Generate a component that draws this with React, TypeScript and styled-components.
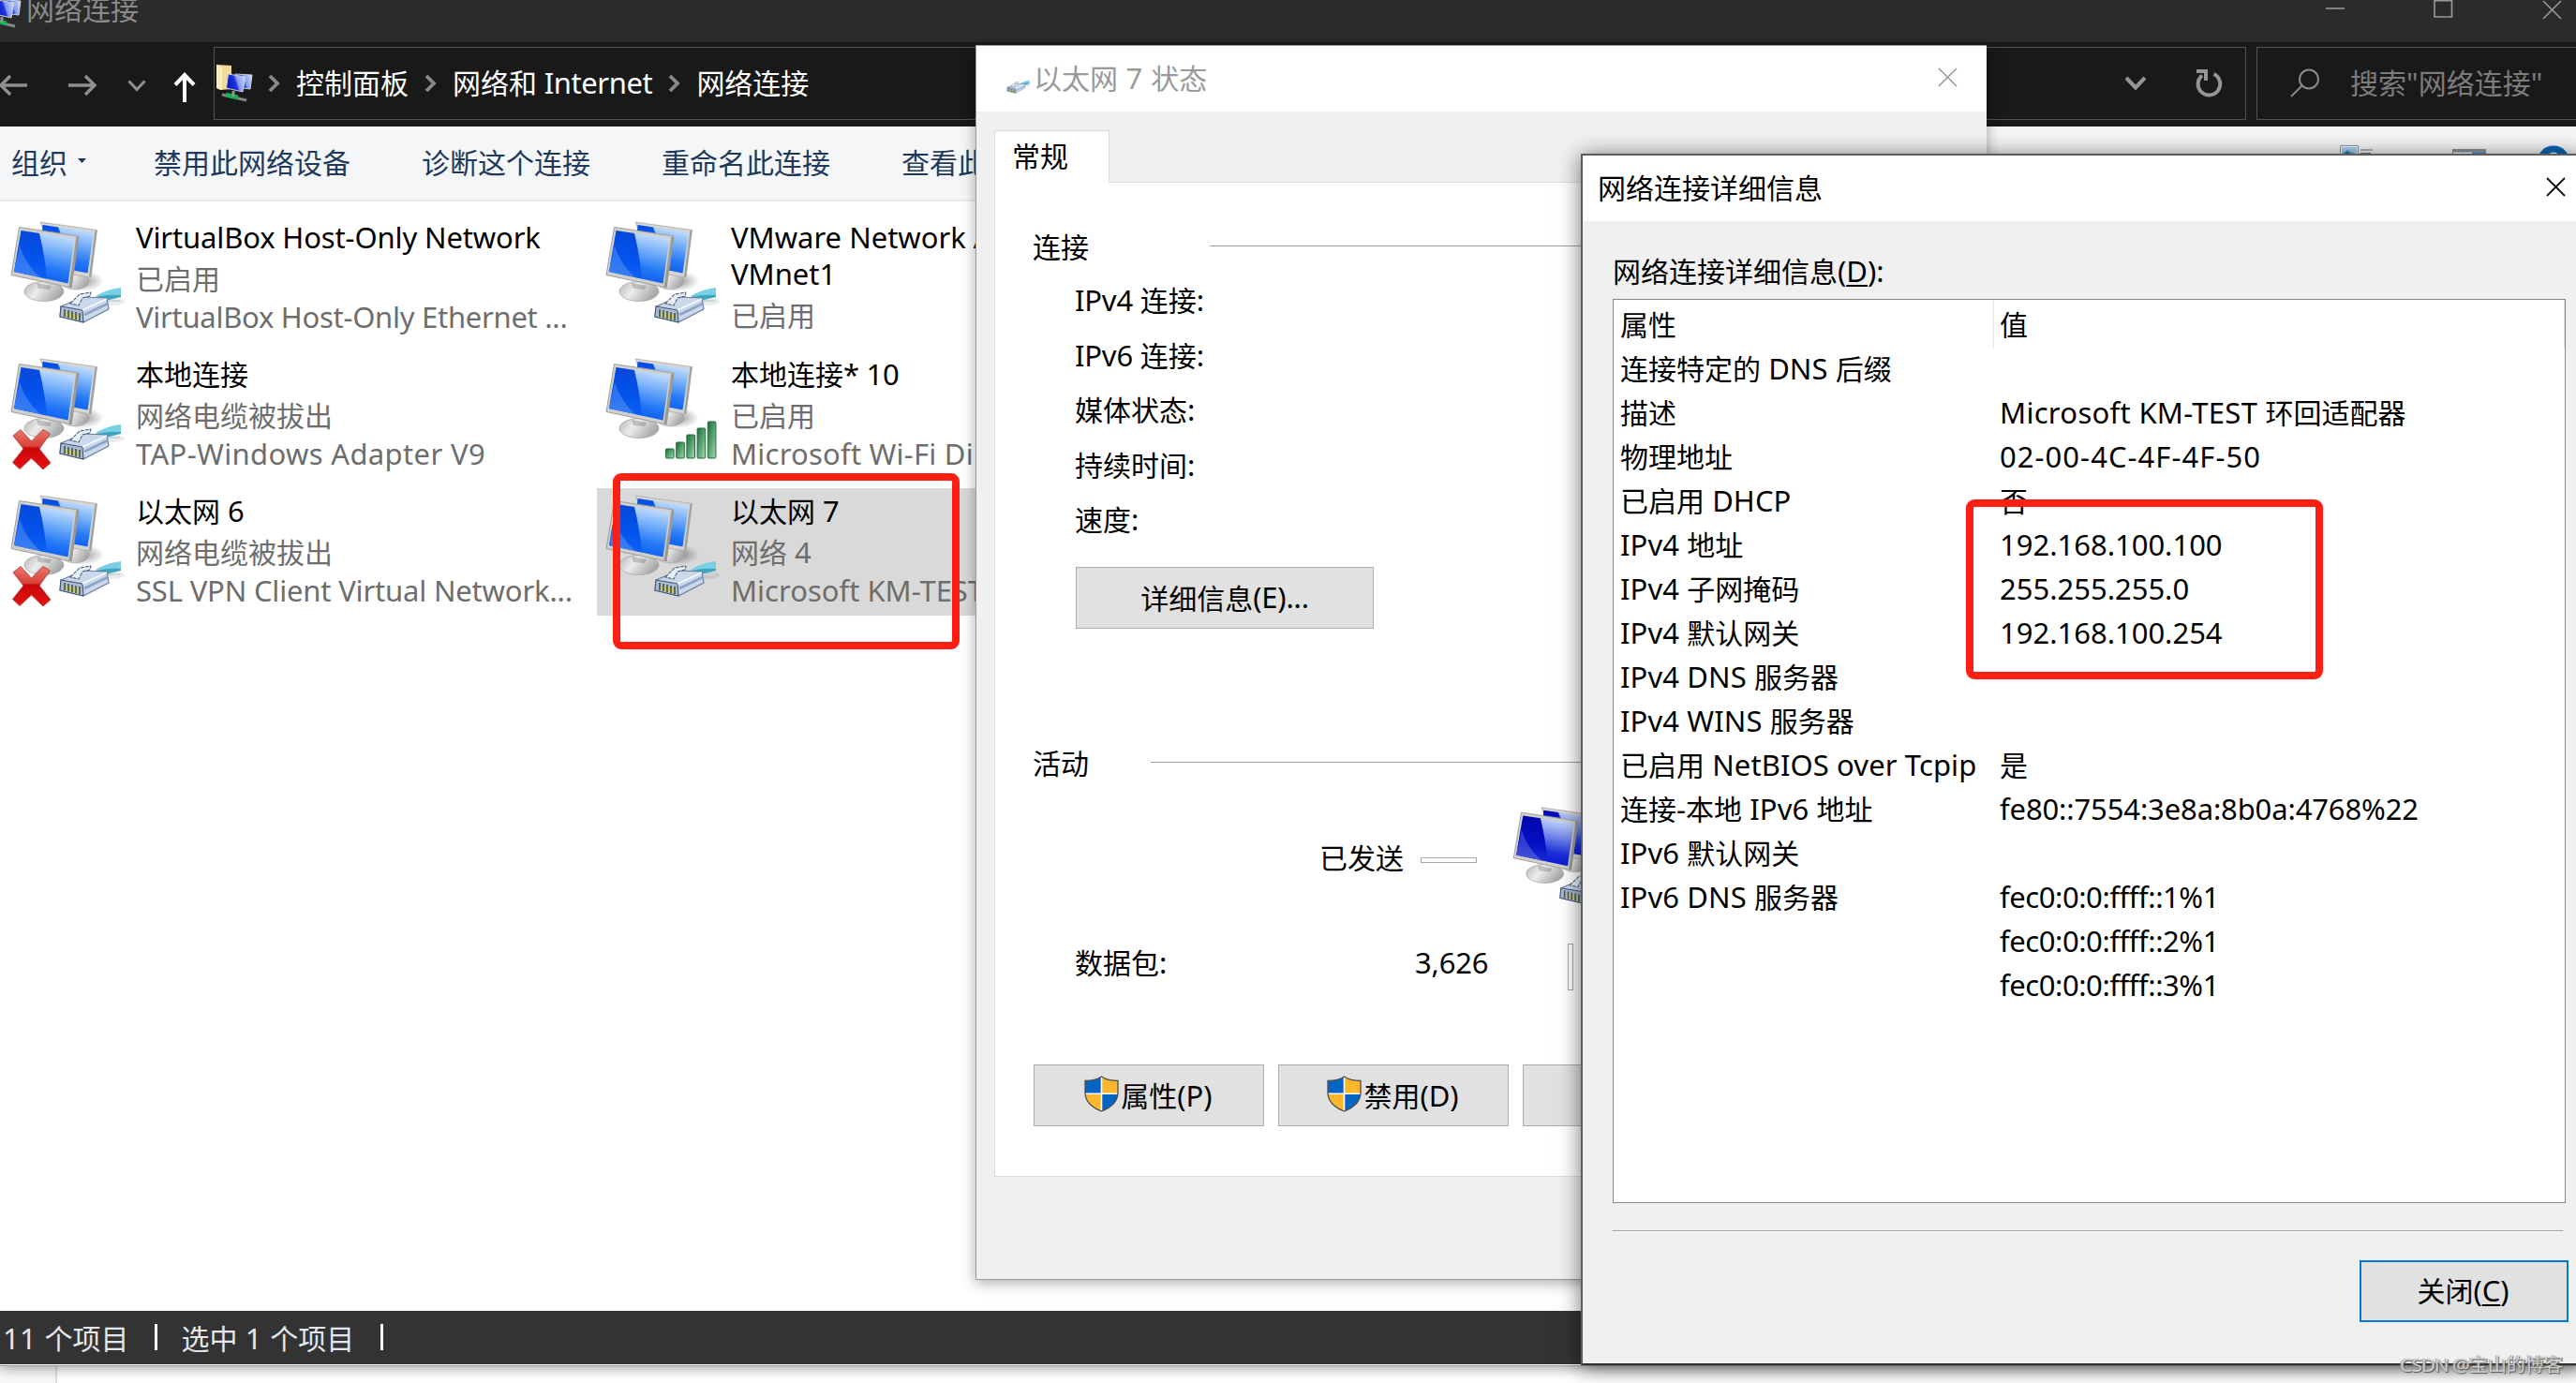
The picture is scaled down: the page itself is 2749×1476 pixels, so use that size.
import React from 'react';
import styled, { createGlobalStyle } from 'styled-components';

const grayText = '#6d6d6d';
const dialogGray = '#f0f0f0';
const markRed = '#ff1f12';

type Badge = 'cable' | 'wifi';

// [text, letter spacing of its Latin part]
type Line = [string, number?];

interface Connection {
    name: Line[];
    lines: Line[];
    badge: Badge;
    unplugged?: boolean;
    selected?: boolean;
}

const connectionColumns: Connection[][] = [
    [
        {
            name: [['VirtualBox Host-Only Network', -0.13]],
            lines: [['已启用'], ['VirtualBox Host-Only Ethernet ...', -0.27]],
            badge: 'cable',
        },
        {
            name: [['本地连接']],
            lines: [['网络电缆被拔出'], ['TAP-Windows Adapter V9', 0.36]],
            badge: 'cable',
            unplugged: true,
        },
        {
            name: [['以太网 6']],
            lines: [
                ['网络电缆被拔出'],
                ['SSL VPN Client Virtual Network...', -0.17],
            ],
            badge: 'cable',
            unplugged: true,
        },
    ],
    [
        {
            name: [['VMware Network A'], ['VMnet1']],
            lines: [['已启用']],
            badge: 'cable',
        },
        {
            name: [['本地连接* 10', -0.3]],
            lines: [['已启用'], ['Microsoft Wi-Fi Di', 0.22]],
            badge: 'wifi',
        },
        {
            name: [['以太网 7']],
            lines: [['网络 4'], ['Microsoft KM-TEST']],
            badge: 'cable',
            selected: true,
        },
    ],
];

const details: { name: string; value: string; tracking?: number }[] = [
    { name: '连接特定的 DNS 后缀', value: '' },
    { name: '描述', value: 'Microsoft KM-TEST 环回适配器', tracking: 0.3 },
    { name: '物理地址', value: '02-00-4C-4F-4F-50', tracking: 1.05 },
    { name: '已启用 DHCP', value: '否' },
    { name: 'IPv4 地址', value: '192.168.100.100' },
    { name: 'IPv4 子网掩码', value: '255.255.255.0' },
    { name: 'IPv4 默认网关', value: '192.168.100.254' },
    { name: 'IPv4 DNS 服务器', value: '' },
    { name: 'IPv4 WINS 服务器', value: '' },
    { name: '已启用 NetBIOS over Tcpip', value: '是' },
    {
        name: '连接-本地 IPv6 地址',
        value: 'fe80::7554:3e8a:8b0a:4768%22',
        tracking: -0.12,
    },
    { name: 'IPv6 默认网关', value: '' },
    { name: 'IPv6 DNS 服务器', value: 'fec0:0:0:ffff::1%1', tracking: -0.42 },
    { name: '', value: 'fec0:0:0:ffff::2%1', tracking: -0.42 },
    { name: '', value: 'fec0:0:0:ffff::3%1', tracking: -0.42 },
];

const statusLabels = ['IPv4 连接:', 'IPv6 连接:', '媒体状态:', '持续时间:', '速度:'];

// Latin runs are set in their own face, slightly larger than the Chinese text
const Mixed: React.FC<{ text: string; tracking?: number }> = ({
    text,
    tracking,
}) => (
    <>
        {text
            .split(/([\x20-\x7e]+)/)
            .filter(Boolean)
            .map((run, index) =>
                /^[\x20-\x7e]/.test(run) ? (
                    <Latin key={index} $tracking={tracking}>
                        {run}
                    </Latin>
                ) : (
                    run
                )
            )}
    </>
);

const Monitors: React.FC<{ deep?: boolean }> = ({ deep }) => {
    const id = deep ? 'deep' : 'bright';
    return (
        <>
            <defs>
                <linearGradient id={`${id}-screen`} x1="0.45" y1="1" x2="0.7" y2="0">
                    <stop offset="0" stopColor={deep ? '#0510cc' : '#0a5af0'} />
                    <stop offset="0.3" stopColor={deep ? '#1c30da' : '#2478f6'} />
                    <stop offset="0.65" stopColor={deep ? '#7f93ee' : '#7ab2fa'} />
                    <stop offset="1" stopColor="#d6e8ff" />
                </linearGradient>
                <linearGradient id={`${id}-glare`} x1="0.5" y1="0" x2="0.4" y2="1">
                    <stop offset="0" stopColor={deep ? '#0004a8' : '#0648da'} />
                    <stop offset="0.6" stopColor={deep ? '#0510c6' : '#0354ee'} />
                    <stop offset="1" stopColor={deep ? '#1a30d2' : '#0f64f4'} />
                </linearGradient>
                <linearGradient id={`${id}-stand`} x1="0" y1="0" x2="1" y2="0.4">
                    <stop offset="0" stopColor="#b4b4b4" />
                    <stop offset="0.45" stopColor="#ececec" />
                    <stop offset="1" stopColor="#a8a8a8" />
                </linearGradient>
                <radialGradient id={`${id}-shade`}>
                    <stop offset="0" stopColor="#000" stopOpacity="0.4" />
                    <stop offset="1" stopColor="#000" stopOpacity="0" />
                </radialGradient>
            </defs>
            <ellipse cx="84" cy="76" rx="22" ry="11" fill={`url(#${id}-shade)`} />
            <ellipse cx="75" cy="76" rx="15" ry="9" fill={`url(#${id}-stand)`} stroke="#a5a5a5" strokeWidth="0.6" />
            <path d="M38 13 98.5 21.5 92 72 60 67 Z" fill="#d6d5d2" stroke="#aaa9a6" strokeWidth="0.8" />
            <path d="M96.5 22 98.5 21.5 92 72 90 71 Z" fill="#a09f9c" />
            <path d="M40.5 16 95 24 88.5 67.5 60 62 Z" fill={`url(#${id}-screen)`} />
            <path d="M40.5 16 57 18.5 60 26 40 23 Z" fill={`url(#${id}-glare)`} />
            <path d="M36 77 52 80 54 86 33 84 Z" fill="#9b9b9b" />
            <ellipse cx="42" cy="87" rx="21" ry="10.5" fill={`url(#${id}-stand)`} stroke="#a0a0a0" strokeWidth="0.7" />
            <path d="M34 78 50 81 48 85 36 84 Z" fill="#000" opacity="0.18" />
            <path d="M15.5 18.5 78.5 28 71 83 7 69.5 Z" fill="#d0cfcc" stroke="#a09f9c" strokeWidth="1" />
            <path d="M76.5 28.5 79.5 28.5 71.5 83.5 68.5 82 Z" fill="#9b9a97" />
            <path d="M17.5 22 74.5 30.5 67.5 78.5 10 66 Z" fill={`url(#${id}-screen)`} />
            <path d="M17.5 22 37 25 Q43 50 45 73.5 L10 66 Z" fill={`url(#${id}-glare)`} />
            <path d="M16 38 Q22 58 38 72 L10 66 Z" fill="#fff" opacity="0.18" />
        </>
    );
};

const CablePlug: React.FC = () => (
    <g strokeLinejoin="round">
        <ellipse cx="114" cy="98" rx="14" ry="4" fill="#000" opacity="0.08" />
        <path d="M97 92 Q108 85 124 83 V92 Q113 94 103 99 Z" fill="#79cfe3" />
        <path d="M98 93 Q110 90 124 91 V93 Q113 95 104 99 Z" fill="#3fa5bf" />
        <path d="M110 97 H123" stroke="#c9d6da" strokeWidth="2" />
        <path d="M60 103 84 93 109 94 111 106 84 120 59 114 Z" fill="#cbd8eb" stroke="#657b9c" strokeWidth="1.2" />
        <path d="M60 103 83 107 84 120 59 114 Z" fill="#a9bbd5" stroke="#43546f" strokeWidth="1.1" />
        <path d="M83 107 109 95" stroke="#f7fbff" strokeWidth="1.8" />
        <path d="M85 112 110 100" stroke="#8ea4c6" strokeWidth="2.6" />
        <path d="M70 100 80 90 92 88 91 92 83 94 79 102 Z" fill="#e6eef7" stroke="#4f637f" strokeWidth="1.1" strokeDasharray="4 1" />
        <path d="M64 106v8M68 107v8M72 108v8M76 109v8M80 110v8" stroke="#4b5536" strokeWidth="1.6" />
        <path d="M66 110v4M70 110v5M74 111v5M78 112v5" stroke="#d2cb45" strokeWidth="1.5" />
    </g>
);

const wifiTops = [109, 102, 94, 87, 80];

const WifiBars: React.FC = () => (
    <>
        <defs>
            <linearGradient id="wifi-bar" x1="0" y1="0" x2="1" y2="1">
                <stop offset="0" stopColor="#1c6b38" />
                <stop offset="0.55" stopColor="#5fa877" />
                <stop offset="1" stopColor="#a9dcb8" />
            </linearGradient>
        </defs>
        {wifiTops.map((top, index) => (
            <rect
                key={top}
                x={70.5 + index * 11.2}
                y={top}
                width="8.6"
                height={119 - top}
                rx="1"
                fill="url(#wifi-bar)"
                stroke="#226b3c"
                strokeWidth="1"
            />
        ))}
    </>
);

const RedCross: React.FC = () => (
    <>
        <defs>
            <linearGradient id="cross" x1="0" y1="0" x2="0" y2="1">
                <stop offset="0" stopColor="#e87870" />
                <stop offset="0.42" stopColor="#da4038" />
                <stop offset="0.46" stopColor="#c80808" />
                <stop offset="1" stopColor="#e81010" />
            </linearGradient>
        </defs>
        <path
            d="M9 95 17 88.5 28.5 101 41 88.5 48.5 93 37 109 49 124 41 131 28.5 119 16 130.5 8.5 123.5 20 109 Z"
            fill="url(#cross)"
            stroke="#b54a45"
            strokeWidth="1"
        />
    </>
);

// Small blue screens on a green cable, used in the title and address bars
const NetworkGlyph: React.FC = () => (
    <>
        <defs>
            <linearGradient id="mini" x1="0" y1="0.5" x2="1" y2="0.2">
                <stop offset="0" stopColor="#0a12c0" />
                <stop offset="0.45" stopColor="#2036dc" />
                <stop offset="0.55" stopColor="#7e96f0" />
                <stop offset="1" stopColor="#d3def8" />
            </linearGradient>
        </defs>
        <path d="M22 11 40 12 38 27 30 26 Z" fill="url(#mini)" stroke="#c9d2dd" />
        <path d="M14.5 11 33 14 30 30 12.5 26 Z" fill="url(#mini)" stroke="#c9d2dd" />
        <path d="M8 33 34 39" stroke="#7f8a86" strokeWidth="3" />
        <path d="M12 33 25 36" stroke="#12b450" strokeWidth="4.5" />
        <path d="M20 29v6" stroke="#8b9792" strokeWidth="3" />
    </>
);

const Shield: React.FC = () => (
    <svg width="37" height="39" viewBox="0 0 37 39">
        <defs>
            <clipPath id="shield">
                <path d="M18.5 1 Q25 5.5 36 5.5 V18 Q36 31 18.5 38 Q1 31 1 18 V5.5 Q12 5.5 18.5 1 Z" />
            </clipPath>
        </defs>
        <g clipPath="url(#shield)">
            <path d="M0 0h37v39H0z" fill="#fff" />
            <path d="M0 0h17.7v18.5H0zM19.3 20H37v19H19.3z" fill="#0664c4" />
            <path d="M19.3 0H37v18.5H19.3zM0 20h17.7v19H0z" fill="#fdb72c" />
        </g>
        <path
            d="M18.5 1 Q25 5.5 36 5.5 V18 Q36 31 18.5 38 Q1 31 1 18 V5.5 Q12 5.5 18.5 1 Z"
            fill="none"
            stroke="#4d4d4d"
            strokeWidth="1.3"
        />
    </svg>
);

const CloseGlyph: React.FC<{ color: string; width?: number }> = ({ color, width = 1.6 }) => (
    <svg width="21" height="21" viewBox="0 0 21 21">
        <path d="M1 1 20 20M20 1 1 20" stroke={color} strokeWidth={width} />
    </svg>
);

const Crumb: React.FC = () => (
    <svg width="13" height="20" viewBox="0 0 13 20">
        <path d="M2 2 10 10 2 18" fill="none" stroke="#8a8a8a" strokeWidth="3.8" />
    </svg>
);

const ConnectionItem: React.FC<{ item: Connection }> = ({ item }) => (
    <Item $selected={item.selected}>
        <ItemIcon viewBox="5 5 125 130">
            <Monitors />
            {item.badge === 'cable' ? <CablePlug /> : <WifiBars />}
            {item.unplugged && <RedCross />}
        </ItemIcon>
        <ItemText>
            <ItemName>
                {item.name.map(([text, tracking]) => (
                    <div key={text}>
                        <Mixed text={text} tracking={tracking} />
                    </div>
                ))}
            </ItemName>
            {item.lines.map(([text, tracking]) => (
                <ItemLine key={text}>
                    <Mixed text={text} tracking={tracking} />
                </ItemLine>
            ))}
        </ItemText>
    </Item>
);

const ExplorerWindow: React.FC = () => (
    <Explorer>
        <ExplorerTitle>
            <svg width="24" height="30" viewBox="18 11 24 30">
                <NetworkGlyph />
            </svg>
            <ExplorerName>网络连接</ExplorerName>
            <WindowControls>
                <svg width="20" height="20" viewBox="0 0 20 20">
                    <path d="M0 9H20" stroke="#9a9a9a" strokeWidth="1.6" />
                </svg>
                <svg width="21" height="21" viewBox="0 0 21 21">
                    <path d="M1 0.8H19.5V18H1Z" fill="none" stroke="#9a9a9a" strokeWidth="1.6" />
                </svg>
                <CloseGlyph color="#9a9a9a" />
            </WindowControls>
        </ExplorerTitle>
        <NavBar>
            <NavButtons>
                <svg width="29" height="24" viewBox="0 0 29 24">
                    <path d="M29 12H1M11 2 1 12 11 22" fill="none" stroke="#8f8f8f" strokeWidth="3.4" />
                </svg>
                <svg width="31" height="24" viewBox="0 0 31 24">
                    <path d="M0 12H29M18 2 28 12 18 22" fill="none" stroke="#8f8f8f" strokeWidth="3.4" />
                </svg>
                <svg width="20" height="13" viewBox="0 0 20 13">
                    <path d="M1.5 1.5 10 10.5 18.5 1.5" fill="none" stroke="#8f8f8f" strokeWidth="3" />
                </svg>
                <svg width="24" height="32" viewBox="0 0 24 32">
                    <path d="M12 32V3M2 13.5 12 3 22 13.5" fill="none" stroke="#fff" strokeWidth="4" />
                </svg>
            </NavButtons>
            <AddressBox>
                <AddressIcon viewBox="0 0 42 42">
                    <path d="M2 1 18 2V27L6 28 2 26Z" fill="#f0dc98" />
                    <path d="M2 1 8 5V28L2 26Z" fill="#fbedb9" />
                    <NetworkGlyph />
                </AddressIcon>
                <Crumb />
                <CrumbText>控制面板</CrumbText>
                <Crumb />
                <CrumbText>
                    <Mixed text="网络和 Internet" tracking={-0.4} />
                </CrumbText>
                <Crumb />
                <CrumbText>网络连接</CrumbText>
                <AddressTools>
                    <svg width="24" height="16" viewBox="0 0 24 16">
                        <path d="M2 2 12 12.5 22 2" fill="none" stroke="#959595" strokeWidth="4" />
                    </svg>
                    <svg width="30" height="30" viewBox="0 0 30 30">
                        <path d="M20.5 5A11.8 11.8 0 1 1 8 6.5" fill="none" stroke="#959595" strokeWidth="4" />
                        <path d="M2 2H12V12" fill="none" stroke="#959595" strokeWidth="4" />
                    </svg>
                </AddressTools>
            </AddressBox>
            <SearchBox>
                <svg width="32" height="32" viewBox="0 0 32 32">
                    <circle cx="20" cy="11.5" r="10" fill="none" stroke="#8a8a8a" strokeWidth="2" />
                    <path d="M12.5 18.5 1 30" stroke="#8a8a8a" strokeWidth="2" />
                </svg>
                <SearchHint>
                    <Mixed text={'搜索"网络连接"'} />
                </SearchHint>
            </SearchBox>
        </NavBar>
        <CommandBar>
            <Organize>
                组织
                <svg width="9" height="5" viewBox="0 0 9 5">
                    <path d="M0 0H9L4.5 5Z" fill="#1e395b" />
                </svg>
            </Organize>
            <span>禁用此网络设备</span>
            <span>诊断这个连接</span>
            <span>重命名此连接</span>
            <span>查看此</span>
            <CommandIcons>
                <svg width="36" height="34" viewBox="0 0 36 34">
                    <path d="M0.5 0.5H19.5V25H0.5Z" fill="#fff" stroke="#8a96a4" />
                    <path d="M2 2H18V23H2Z" fill="#5b9fe0" />
                    <path d="M2 9 8 5 18 10V2H2Z" fill="#a9d1f5" />
                    <path d="M2 11 8 7 18 13V23H2Z" fill="#2c6a58" />
                    <path d="M22 5H35M22 8.5H33" stroke="#6a7480" strokeWidth="1.2" />
                </svg>
                <svg width="36" height="30" viewBox="0 0 36 30">
                    <path d="M0.5 0.5H35.5V29H0.5Z" fill="#fff" stroke="#7e858d" />
                    <path d="M0 0H36V3.5H0Z" fill="#8b929a" />
                    <path d="M21 3.5H35V29H21Z" fill="#3a8fd0" />
                    <path d="M10 4V29M0 7H21" stroke="#aab1b8" />
                </svg>
                <svg width="36" height="36" viewBox="0 0 36 36">
                    <circle cx="18" cy="18" r="17.5" fill="#0c66b8" />
                    <path d="M13 14.5Q13 9 18 9T23 14.5Q23 17 18 20V23" fill="none" stroke="#fff" strokeWidth="3" />
                </svg>
            </CommandIcons>
        </CommandBar>
        <FileArea>
            {connectionColumns.map((column, index) => (
                <FileColumn key={index}>
                    {column.map((item) => (
                        <ConnectionItem key={item.name[0][0]} item={item} />
                    ))}
                </FileColumn>
            ))}
        </FileArea>
        <StatusBar>
            <span>
                <Mixed text="11 个项目" tracking={0.3} />
            </span>
            <Separator />
            <span>
                <Mixed text="选中 1 个项目" tracking={0.3} />
            </span>
            <Separator />
        </StatusBar>
    </Explorer>
);

const StatusWindow: React.FC = () => (
    <StatusDialog>
        <StatusTitle>
            <svg width="25" height="16" viewBox="57 84 68 38">
                <CablePlug />
            </svg>
            <span>
                <Mixed text="以太网 7 状态" tracking={0.5} />
            </span>
            <StatusClose>
                <CloseGlyph color="#999" />
            </StatusClose>
        </StatusTitle>
        <Tab>常规</Tab>
        <TabPanel>
            <GroupHeading $gap={129}>连接</GroupHeading>
            <StatusLabels>
                {statusLabels.map((label) => (
                    <StatusLabel key={label}>
                        <Mixed text={label} tracking={-0.2} />
                    </StatusLabel>
                ))}
            </StatusLabels>
            <DetailsButton>
                <Mixed text="详细信息(E)..." tracking={-0.2} />
            </DetailsButton>
            <GroupHeading $gap={66}>活动</GroupHeading>
            <SentRow>
                <span>已发送</span>
                <Dash />
                <svg width="120" height="124" viewBox="5 10 125 130">
                    <Monitors deep />
                    <CablePlug />
                </svg>
            </SentRow>
            <PacketRow>
                <PacketLabel>
                    <Mixed text="数据包:" />
                </PacketLabel>
                <PacketCount>
                    <Mixed text="3,626" tracking={-0.2} />
                </PacketCount>
                <PacketBar />
            </PacketRow>
            <ButtonRow>
                <ActionButton>
                    <Shield />
                    <span>
                        <Mixed text="属性(P)" />
                    </span>
                </ActionButton>
                <ActionButton>
                    <Shield />
                    <span>
                        <Mixed text="禁用(D)" />
                    </span>
                </ActionButton>
                <ActionButton />
            </ButtonRow>
        </TabPanel>
    </StatusDialog>
);

const DetailsWindow: React.FC = () => (
    <DetailsDialog>
        <DetailsTitle>
            网络连接详细信息
            <CloseGlyph color="#111" width={1.8} />
        </DetailsTitle>
        <DetailsBody>
            <ListCaption>
                网络连接详细信息<Latin>(<u>D</u>):</Latin>
            </ListCaption>
            <DetailsList>
                <ListHeader>
                    <HeaderCell>属性</HeaderCell>
                    <HeaderCell>值</HeaderCell>
                </ListHeader>
                {details.map(({ name, value, tracking }, index) => (
                    <DetailsRow key={index}>
                        <span>
                            <Mixed text={name} tracking={0.1} />
                        </span>
                        <span>
                            <Mixed text={value} tracking={tracking} />
                        </span>
                    </DetailsRow>
                ))}
            </DetailsList>
            <Rule />
            <CloseButton>
                关闭<Latin>(<u>C</u>)</Latin>
            </CloseButton>
        </DetailsBody>
    </DetailsDialog>
);

const App: React.FC = () => (
    <>
        <GlobalStyle />
        <Desktop>
            <ExplorerWindow />
            <Underlay />
            <StatusWindow />
            <DetailsWindow />
            <ConnectionMark />
            <AddressMark />
            <Watermark>
                <Mixed text="CSDN @宝山的博客" tracking={-0.9} />
            </Watermark>
        </Desktop>
    </>
);
export default App;

const GlobalStyle = createGlobalStyle`
    * {
        box-sizing: border-box;
    }
    body {
        margin: 0;
        font-family: 'Noto Sans CJK SC', 'Noto Sans', sans-serif;
        font-size: 30px;
        line-height: 40px;
        color: #000;
        white-space: pre;
    }
    svg {
        display: block;
        flex: none;
    }
`;
const Latin = styled.span<{ $tracking?: number }>`
    font-family: 'Noto Sans', sans-serif;
    font-size: 1.033em;
    line-height: 0;
    letter-spacing: ${({ $tracking = 0 }) => $tracking}px;

    u {
        text-decoration-thickness: 2px;
        text-underline-offset: 3px;
    }
`;
const Desktop = styled.div`
    position: relative;
    width: 2749px;
    height: 1476px;
    overflow: hidden;
    background: #fff;
`;
const Explorer = styled.div`
    position: relative;
    z-index: 1;
    display: flex;
    flex-direction: column;
    height: 1457px;
    background: #fff;
    border-bottom: 1px solid #fff;
    box-shadow: 0 1px 0 #9b9b9b, 0 2px 14px rgba(0, 0, 0, 0.45);
`;
const Underlay = styled.div`
    width: 61px;
    height: 19px;
    background: #f8f8f8;
    border-right: 2px solid #dedede;
`;
const ExplorerTitle = styled.div`
    display: flex;
    align-items: flex-start;
    height: 45px;
    background: #2b2b2b;
    color: #8a8a8a;
`;
const ExplorerName = styled.span`
    line-height: 17px;
    margin-left: 4px;
    flex: 1;
`;
const WindowControls = styled.div`
    display: flex;
    align-items: flex-start;
    gap: 95px;
    margin-right: 15px;
`;
const NavBar = styled.div`
    display: flex;
    height: 90px;
    padding-top: 5px;
    background: #191919;
`;
const NavButtons = styled.div`
    display: flex;
    flex: none;
    align-items: center;
    width: 228px;
    height: 82px;

    svg:nth-child(2) {
        margin-left: 44px;
    }
    svg:nth-child(3) {
        margin-left: 32px;
    }
    svg:nth-child(4) {
        margin: 4px 0 0 29px;
    }
`;
const AddressBox = styled.div`
    display: flex;
    flex: none;
    align-items: center;
    width: 2169px;
    height: 78px;
    border: 1px solid #535353;
    color: #fff;
`;
const AddressIcon = styled.svg`
    width: 42px;
    height: 42px;
    margin-right: 15px;
`;
const CrumbText = styled.span`
    padding: 0 17px 4px 17px;
`;
const AddressTools = styled.div`
    display: flex;
    align-items: center;
    gap: 51px;
    margin-left: auto;
    margin-right: 24px;
`;
const SearchBox = styled.div`
    display: flex;
    flex: none;
    align-items: center;
    gap: 32px;
    width: 360px;
    height: 78px;
    margin-left: 11px;
    padding-left: 35px;
    border: 1px solid #535353;
    color: #7c7c7c;
`;
const SearchHint = styled.span`
    padding-bottom: 4px;
`;
const CommandBar = styled.div`
    display: flex;
    align-items: center;
    gap: 76px;
    height: 80px;
    padding: 0 6px 5px 12px;
    background: #f5f6f7;
    border-bottom: 2px solid #eaebec;
    color: #1e395b;
`;
const Organize = styled.span`
    display: flex;
    align-items: center;
    gap: 11px;
    margin-right: -4px;
`;
const CommandIcons = styled.div`
    display: flex;
    align-items: flex-start;
    gap: 84px;
    margin: 2px 0 0 auto;
    height: 36px;

    svg:nth-child(2) {
        margin-top: 4px;
    }
    svg:nth-child(3) {
        margin-left: -30px;
    }
`;
const FileArea = styled.div`
    display: flex;
    flex: 1;
    padding: 14px 0 0 2px;
`;
const FileColumn = styled.div`
    display: flex;
    flex-direction: column;
    gap: 10px;
    width: 635px;
`;
const Item = styled.div<{ $selected?: boolean }>`
    display: flex;
    width: 620px;
    height: 136px;
    padding-left: 8px;
    background: ${({ $selected }) => ($selected ? '#d9d9d9' : 'transparent')};
`;
const ItemIcon = styled.svg`
    width: 125px;
    height: 130px;
`;
const ItemText = styled.div`
    margin-left: 10px;
    padding-top: 4px;
`;
const ItemName = styled.div`
    line-height: 39px;
    margin-bottom: 4px;
`;
const ItemLine = styled.div`
    line-height: 41px;
    color: ${grayText};
`;
const StatusBar = styled.div`
    display: flex;
    align-items: center;
    height: 57px;
    padding: 0 0 1px 3px;
    background: #333;
    color: #e3e6ec;
`;
const Separator = styled.i`
    width: 3px;
    height: 28px;
    margin: 0 25px 0 28px;
    background: #fff;
`;
const StatusDialog = styled.div`
    position: absolute;
    z-index: 2;
    left: 1041px;
    top: 48px;
    width: 1079px;
    height: 1318px;
    background: ${dialogGray};
    border: solid #9c9c9c;
    border-width: 1px 0 1px 1px;
    box-shadow: 0 3px 14px rgba(0, 0, 0, 0.35);
`;
const StatusTitle = styled.div`
    display: flex;
    align-items: center;
    height: 70px;
    padding: 0 31px 5px 32px;
    background: #fff;
    color: #999;

    & > svg {
        margin: 22px 4px 0 0;
    }
`;
const StatusClose = styled.div`
    margin: 2px 0 0 auto;
`;
const Tab = styled.div`
    position: relative;
    width: 123px;
    height: 56px;
    margin: 20px 0 -1px 19px;
    padding: 5px 0 0 18px;
    background: #fff;
    border: 1px solid #dcdcdc;
    border-bottom: none;
`;
const TabPanel = styled.div`
    width: 1040px;
    height: 1062px;
    margin-left: 19px;
    padding: 49px 0 0 40px;
    background: #fff;
    border: 1px solid #dcdcdc;
`;
const GroupHeading = styled.div<{ $gap: number }>`
    display: flex;
    height: 40px;
    line-height: 36px;

    &::after {
        content: '';
        flex: 1;
        height: 1px;
        margin: 18px 20px 0 ${({ $gap }) => $gap}px;
        background: #9d9d9d;
    }
`;
const StatusLabels = styled.div`
    margin: 6px 0 0 45px;
`;
const StatusLabel = styled.div`
    line-height: 58.5px;
`;
const Button = styled.button`
    display: flex;
    align-items: center;
    justify-content: center;
    padding: 0 0 2px;
    background: #e1e1e1;
    border: 1px solid #adadad;
    font: inherit;
    color: #000;
`;
const DetailsButton = styled(Button)`
    width: 318px;
    height: 66px;
    margin: 22px 0 124px 46px;
`;
const SentRow = styled.div`
    display: flex;
    align-items: flex-start;
    margin: 23px 0 0 306px;

    & > span {
        margin-top: 36px;
    }
    & > svg {
        margin-top: 1px;
    }
`;
const Dash = styled.i`
    width: 60px;
    height: 6px;
    margin: 57px 37px 0 18px;
    border: 1px solid #a8a8a8;
`;
const PacketRow = styled.div`
    display: flex;
    height: 50px;
    line-height: 39px;
    margin: 24px 0 0 45px;
`;
const PacketLabel = styled.span`
    width: 363px;
`;
const PacketCount = styled.span`
    width: 163px;
`;
const PacketBar = styled.i`
    width: 6px;
    height: 50px;
    border: 1px solid #a8a8a8;
`;
const ButtonRow = styled.div`
    display: flex;
    gap: 15px;
    margin: 79px 0 0 1px;
`;
const ActionButton = styled(Button)`
    gap: 2px;
    width: 246px;
    height: 66px;
    padding: 0 1px 2px 0;
`;
const DetailsDialog = styled.div`
    position: absolute;
    z-index: 3;
    left: 1687px;
    top: 164px;
    width: 1074px;
    height: 1293px;
    background: ${dialogGray};
    border: 2px solid #5c5c5c;
    border-bottom-color: #333;
    box-shadow: 0 2px 22px rgba(0, 0, 0, 0.55);
`;
const DetailsTitle = styled.div`
    display: flex;
    align-items: center;
    justify-content: space-between;
    height: 70px;
    padding: 0 21px 4px 16px;
    background: #fff;
`;
const DetailsBody = styled.div`
    display: flex;
    flex-direction: column;
    padding: 32px 0 0 32px;
`;
const ListCaption = styled.div`
    height: 51px;
`;
const DetailsList = styled.div`
    width: 1017px;
    height: 965px;
    background: #fff;
    border: 1px solid #828790;
`;
const ListHeader = styled.div`
    display: flex;
    height: 51px;
`;
const HeaderCell = styled.div`
    width: 406px;
    padding: 5px 0 0 7px;
    border-right: 1px solid #e5e5e5;

    & + & {
        flex: 1;
        padding-left: 6px;
    }
`;
const DetailsRow = styled.div`
    display: grid;
    grid-template-columns: 405px 1fr;
    padding-left: 7px;
    height: 47px;
    line-height: 43px;
`;
const Rule = styled.div`
    width: 1014px;
    height: 2px;
    margin-top: 29px;
    background: #a0a0a0;
    border-bottom: 1px solid #fff;
`;
const CloseButton = styled(Button)`
    display: block;
    width: 223px;
    height: 66px;
    margin: 30px 0 0 797px;
    padding: 0 2px 5px 0;
    border: 2px solid #0078d7;
`;
const Mark = styled.div`
    position: absolute;
    z-index: 4;
    border: 8px solid ${markRed};
    border-radius: 9px;
`;
const ConnectionMark = styled(Mark)`
    left: 654px;
    top: 505px;
    width: 370px;
    height: 188px;
`;
const AddressMark = styled(Mark)`
    left: 2098px;
    top: 533px;
    width: 381px;
    height: 192px;
`;
const Watermark = styled.div`
    position: absolute;
    z-index: 5;
    right: 14px;
    bottom: 3px;
    font-size: 20px;
    line-height: 34px;
    color: rgba(235, 235, 235, 0.75);
    text-shadow: 1px 1px 1px #555, -1px 0 1px #999;
`;
